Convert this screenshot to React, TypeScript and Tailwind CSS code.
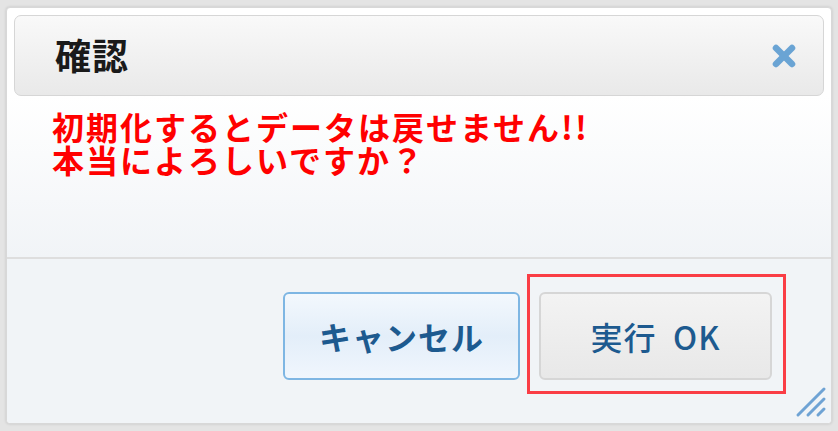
import React from 'react';

const jp = { fontFamily: '"Noto Sans CJK JP", "Noto Sans", sans-serif' };

function ResizeGrip() {
    return (
        <svg width="34" height="34" viewBox="0 0 34 34" className="absolute right-[3px] bottom-[4px]">
            <g stroke="#6fa3d4" strokeWidth="3" strokeLinecap="round">
                <line x1="4" y1="30" x2="30" y2="4" />
                <line x1="14" y1="30" x2="30" y2="14" />
                <line x1="24" y1="30" x2="30" y2="24" />
            </g>
        </svg>
    );
}

export default function App() {
    return (
        <div className="w-[838px] h-[431px] bg-[#e4e4e4] pt-[7px] pl-[6px] overflow-hidden" style={jp}>
            <div className="relative w-[826px] h-[417px] bg-white border border-[#d8d8d8] rounded-[4px] p-[7px] flex flex-col shadow-[0_0_3px_rgba(0,0,0,0.15)]">
                {/* title bar */}
                <div className="h-[81px] shrink-0 rounded-[7px] border border-[#d6d6d6] bg-gradient-to-b from-[#f9f9f9] to-[#e9e9e9] flex items-center justify-between pl-[40px] pr-[26px]">
                    <span className="text-[36px] leading-none font-bold text-[#1a1a1a] tracking-[1px] -mt-[4px]">確認</span>
                    <svg width="26" height="26" viewBox="0 0 26 26">
                        <g stroke="#6aa4d4" strokeWidth="6.5" strokeLinecap="round">
                            <line x1="5" y1="5" x2="21" y2="21" />
                            <line x1="21" y1="5" x2="5" y2="21" />
                        </g>
                    </svg>
                </div>

                {/* body */}
                <div className="flex-1 bg-gradient-to-b from-white to-[#f1f4f7] -mx-[7px] px-[45px] pt-[14px]">
                    <p className="text-[32px] leading-[33px] font-bold text-[#ff0000] tracking-[2px]">
                        初期化するとデータは戻せません!!
                        <br />
                        本当によろしいですか？
                    </p>
                </div>

                {/* button pane */}
                <div className="h-[166px] shrink-0 -mx-[7px] -mb-[7px] bg-[#f1f4f7] border-t-2 border-[#dedede] flex justify-end items-start pt-[15px] pr-[45px] gap-[7px] rounded-b-[4px]">
                    <button className="mt-[18px] w-[237px] h-[88px] rounded-[6px] border-2 border-[#7eb6e3] bg-gradient-to-b from-[#f3f8fd] via-[#e3eef9] to-[#f0f6fd] text-[32px] font-bold text-[#1d5a8f] tracking-[1px]">
                        キャンセル
                    </button>
                    <div className="border-[3px] border-[#fa3d45] pt-[15px] pl-[9px] pr-[11px] pb-[11px]">
                        <button className="w-[233px] h-[88px] rounded-[6px] border-2 border-[#d6d6d6] bg-gradient-to-b from-[#f3f3f3] to-[#e8e8e8] text-[32px] font-medium text-[#1d5a8f] tracking-[1px]">
                            実行&nbsp;&nbsp;OK
                        </button>
                    </div>
                </div>
                <ResizeGrip />
            </div>
        </div>
    );
}
